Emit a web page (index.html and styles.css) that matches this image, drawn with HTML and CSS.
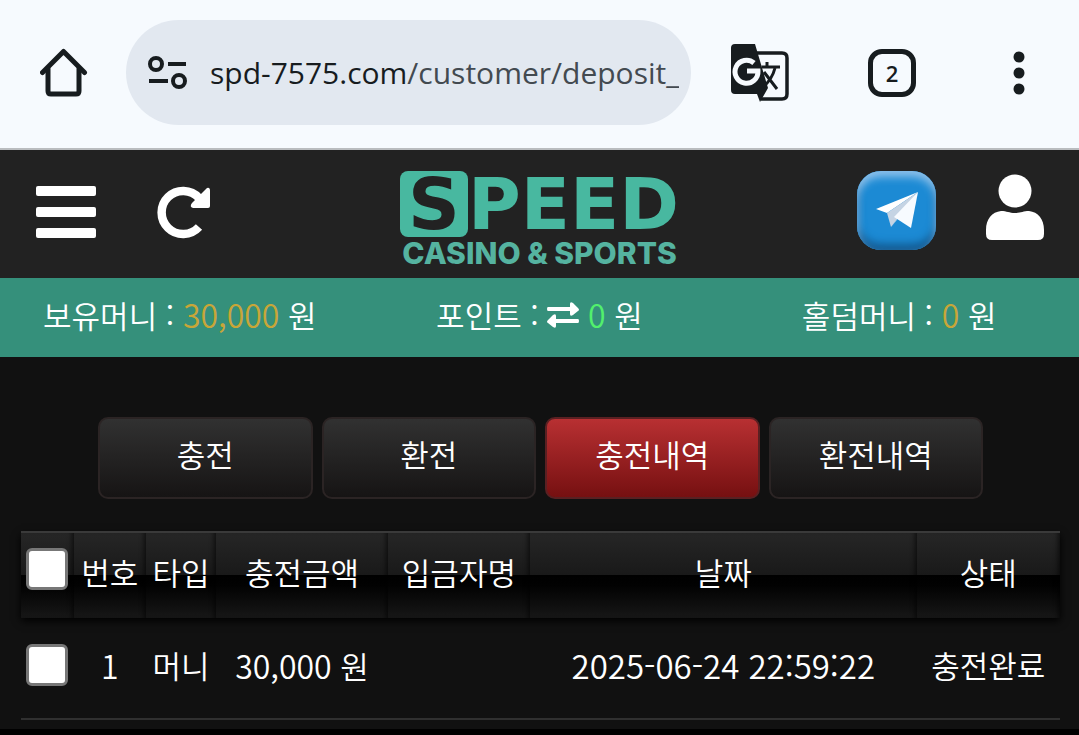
FILE: index.html
```
<!DOCTYPE html>
<html lang="ko">
<head>
<meta charset="UTF-8">
<meta name="viewport" content="width=device-width, initial-scale=1.0">
<title>SPEED - 충전내역</title>
<link rel="stylesheet" href="styles.css">
</head>
<body>
<!-- Browser bar -->
<div class="browser">
    <button type="button" class="icon-btn" aria-label="Home">
        <svg width="48" height="50" viewBox="0 0 48 50" fill="none" stroke="#171c1f" stroke-width="5" stroke-linejoin="round" stroke-linecap="round"><path d="M2.500 24.500 23.500 3.500 44.500 24.500"/><path d="M8 21V43Q8 46 11 46H36Q39 46 39 43V21"/></svg>
    </button>
    <button type="button" class="address">
        <svg width="40" height="34" viewBox="0 0 40 34" fill="none" stroke="#171c1f" stroke-width="4"><circle cx="8" cy="8" r="6"/><path d="M20 8H38M1 25H20"/><circle cx="31" cy="25" r="6"/></svg>
        <span class="url">spd-7575.com<span class="path">/customer/deposit_</span></span>
    </button>
    <button type="button" class="icon-btn translate" aria-label="Translate">
        <svg width="60" height="60" viewBox="0 0 60 60"><path d="M27 10H52Q57 10 57 15V51Q57 56 52 56H31" fill="none" stroke="#171c1f" stroke-width="3.500"/><path d="M5 1H25L38 45 30 59 27 51H5Q1 51 1 47V5Q1 1 5 1Z" fill="#171c1f"/><path d="M24 20A11.500 11.500 0 1 0 28 28H17" fill="none" stroke="#f6fafe" stroke-width="5"/><path d="M37 19V24M50 24H31.500" fill="none" stroke="#171c1f" stroke-width="3"/><path d="M45 25C43 33 39 39 33 44M34 29 47 46" fill="none" stroke="#171c1f" stroke-width="3"/></svg>
    </button>
    <button type="button" class="tabs" aria-label="Tabs">2</button>
    <button type="button" class="icon-btn" aria-label="More">
        <svg width="12" height="44" viewBox="0 0 12 44" fill="#171c1f"><circle cx="6" cy="6" r="5.500"/><circle cx="6" cy="22" r="5.500"/><circle cx="6" cy="38" r="5.500"/></svg>
    </button>
</div>

<!-- Site header -->
<header class="header">
    <div class="header-side">
        <button type="button" class="icon-btn" aria-label="메뉴">
            <svg width="62" height="58" viewBox="0 -4 62 58" fill="#fff"><rect x="1" y="1" width="60" height="10" rx="2"/><rect x="1" y="22" width="60" height="10" rx="2"/><rect x="1" y="43" width="60" height="10" rx="2"/></svg>
        </button>
        <button type="button" class="icon-btn" aria-label="새로고침">
            <svg width="54" height="58" viewBox="0 -4 54 58"><path d="M42 13A21.500 21.500 0 1 0 42 42" fill="none" stroke="#fff" stroke-width="8.500"/><path d="M50 3Q53 2 53 6V21Q53 23 51 23H36Q32 22 35 18Z" fill="#fff"/></svg>
        </button>
    </div>
    <a href="#" class="logo">
        <span class="logo-top"><span class="logo-s">S</span><span class="logo-rest">PEED</span></span>
        <span class="logo-sub">CASINO &amp; SPORTS</span>
    </a>
    <div class="header-side header-right">
        <a href="#" class="telegram" aria-label="Telegram">
            <svg width="44" height="38" viewBox="0 0 44 38"><path d="M43 1 1 18 12 22Z" fill="#fff"/><path d="M43 1 12 22 16 36Z" fill="#c5d4e4"/><path d="M43 1 16 36 21 30Z" fill="#dde8f4"/><path d="M43 1 19 26 36 37Z" fill="#f7fbff"/></svg>
        </a>
        <a href="#" class="icon-btn" aria-label="내 정보">
            <svg width="58" height="72" viewBox="0 0 58 72" fill="#fff"><circle cx="29" cy="17" r="16.500"/><path d="M15 37C21 37 23 39 29 39S37 37 43 37C52 38 58 45 58 56V60Q58 66 52 66H6Q0 66 0 60V56C0 45 6 38 15 37Z"/></svg>
        </a>
    </div>
</header>

<!-- Balances -->
<div class="balance">
    <div>보유머니 : <span class="num gold">30,000</span> 원</div>
    <div>포인트 : <button type="button" class="icon-btn swap" aria-label="전환"><svg width="32" height="26" viewBox="0 0 32 26" fill="#fff"><path d="M1 5H23V2Q23-1 26 1L31 6Q33 8 31 9L26 13Q23 15 23 12V9H1Q0 9 0 7T1 5ZM31 17H9V14Q9 11 6 13L1 18Q-1 20 1 21L6 25Q9 27 9 24V21H31Q32 21 32 19T31 17Z"/></svg></button> <span class="num green">0</span> 원</div>
    <div>홀덤머니 : <span class="num gold">0</span> 원</div>
</div>

<main class="content">
    <nav class="menu">
        <a href="#">충전</a>
        <a href="#">환전</a>
        <a href="#" class="active">충전내역</a>
        <a href="#">환전내역</a>
    </nav>

    <table class="list">
        <colgroup>
            <col class="c-check"><col class="c-no"><col class="c-type"><col class="c-amount"><col class="c-name"><col class="c-date"><col class="c-state">
        </colgroup>
        <thead>
            <tr>
                <th class="check"><input type="checkbox" aria-label="전체 선택"></th>
                <th>번호</th>
                <th>타입</th>
                <th>충전금액</th>
                <th>입금자명</th>
                <th>날짜</th>
                <th>상태</th>
            </tr>
        </thead>
        <tbody>
            <tr>
                <td><input type="checkbox" aria-label="1번 선택"></td>
                <td class="num">1</td>
                <td>머니</td>
                <td><span class="num">30,000</span> 원</td>
                <td></td>
                <td class="date">2025-06-24 22:59:22</td>
                <td>충전완료</td>
            </tr>
        </tbody>
    </table>
</main>
</body>
</html>
```

FILE: styles.css
```
* {
    box-sizing: border-box;
}
body {
    margin: 0;
    background: #000;
    color: #fff;
    font-family: "Noto Sans CJK KR", sans-serif;
    font-size: 31px;
    font-weight: 350;
    line-height: 40px;
}
a {
    color: inherit;
    text-decoration: none;
}
button {
    padding: 0;
    border: 0;
    background: none;
    color: inherit;
    font: inherit;
}
svg {
    display: block;
}
.icon-btn {
    flex: none;
}
.num {
    font-size: 32px;
}

/* browser bar */
.browser {
    display: flex;
    align-items: center;
    height: 150px;
    padding: 0 54px 3px 40px;
    background: #f6fafe;
    border-bottom: 2px solid #b9bcbf;
}
.address {
    display: flex;
    flex: 1;
    align-items: center;
    gap: 22px;
    min-width: 0;
    height: 105px;
    margin: 0 39px 0 38px;
    padding: 0 10px 0 22px;
    border-radius: 53px;
    background: #e2e8f0;
    text-align: left;
}
.address svg {
    flex: none;
}
.url {
    overflow: hidden;
    color: #171c1f;
    font-family: "Open Sans", sans-serif;
    font-size: 30px;
    font-weight: 400;
    white-space: nowrap;
}
.path {
    color: #434a50;
}
.tabs {
    flex: none;
    width: 48px;
    height: 48px;
    margin: 0 97px 0 78px;
    border: 5px solid #171c1f;
    border-radius: 14px;
    color: #171c1f;
    font-family: "Open Sans", sans-serif;
    font-size: 22px;
    font-weight: 600;
    line-height: 34px;
}

/* header */
.header {
    display: grid;
    grid-template-columns: 1fr auto 1fr;
    align-items: center;
    height: 128px;
    padding: 0 35px 8px;
    background: #222;
}
.header-side {
    display: flex;
    align-items: center;
    gap: 60px;
}
.header-right {
    justify-content: flex-end;
    gap: 50px;
}
.logo {
    align-self: start;
    padding-top: 21px;
    color: #48b8a0;
}
.logo-top {
    display: flex;
    align-items: center;
    justify-content: center;
    height: 66px;
    font-family: "DejaVu Sans", sans-serif;
    font-size: 72px;
    font-weight: 700;
    line-height: 66px;
}
.logo-s {
    width: 68px;
    height: 66px;
    border-radius: 8px;
    background: #48b8a0;
    color: #222;
    text-align: center;
}
.logo-sub {
    display: block;
    color: #55b3a0;
    font-family: Inter, sans-serif;
    font-size: 30px;
    font-weight: 800;
    line-height: 32px;
    text-align: center;
}
.telegram {
    display: flex;
    align-items: center;
    justify-content: center;
    width: 79px;
    height: 79px;
    border-radius: 24px;
    background: #1c8ad4;
    box-shadow: inset 0 6px 8px #8cc0ea, inset 0 -6px 8px #12588f, inset 3px 0 6px #3a9ade;
}

/* balance bar */
.balance {
    display: grid;
    grid-template-columns: repeat(3, 1fr);
    align-items: center;
    height: 79px;
    padding-bottom: 7px;
    background: #35907b;
    text-align: center;
}
.swap {
    display: inline-block;
}
.gold {
    color: #c8a638;
}
.green {
    color: #52f06c;
}

/* content */
.content {
    padding: 60px 19px 9px 21px;
    background: #111;
}
.menu {
    display: grid;
    grid-template-columns: repeat(4, 1fr);
    gap: 9px;
    padding: 0 77px;
}
.menu a {
    padding: 15px 0 23px;
    border: 2px solid #2b2424;
    border-radius: 10px;
    background: linear-gradient(#313131, #161414);
    text-align: center;
}
.menu .active {
    border-color: #5a2022;
    background: linear-gradient(#b83032, #761011);
}

/* history table */
.list {
    width: 100%;
    margin-top: 32px;
    border-collapse: collapse;
    table-layout: fixed;
    text-align: center;
}
.list thead {
    box-shadow: 0 3px 8px #000;
}
.list th {
    height: 86px;
    padding: 0 0 8px;
    border-top: 2px solid #3a3a3a;
    background: linear-gradient(#262626, #191919 50%, #000 50%, #020202 62%, #171717);
    box-shadow: inset -5px 0 5px -3px rgba(0, 0, 0, 0.6);
    font-weight: 350;
}
.list .check {
    padding-bottom: 14px;
}
.list td {
    height: 101px;
    padding: 0 0 6px;
    border-bottom: 2px solid #303030;
    white-space: nowrap;
}
.list .date {
    font-size: 33px;
}
.list input {
    display: block;
    width: 42px;
    height: 42px;
    margin: 0 auto;
    appearance: none;
    border: 3px solid #777;
    border-radius: 6px;
    background: #fff;
}
.c-check { width: 5.1%; }
.c-no { width: 6.9%; }
.c-type { width: 6.8%; }
.c-amount { width: 16.5%; }
.c-name { width: 13.7%; }
.c-date { width: 37.2%; }
.c-state { width: 13.8%; }
```
